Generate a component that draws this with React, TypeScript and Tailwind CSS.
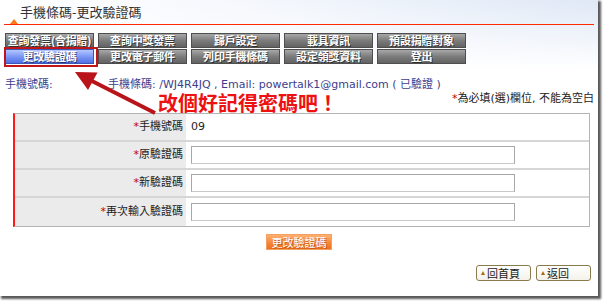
import React from "react";

const TOP_ROW = ["查詢發票(含捐贈)", "查詢中獎發票", "歸戶設定", "載具資訊", "預設捐贈對象"];
const BOTTOM_ROW = ["更改驗證碼", "更改電子郵件", "列印手機條碼", "設定領獎資料", "登出"];

const FIELDS = [
  { label: "手機號碼", value: "09" },
  { label: "原驗證碼" },
  { label: "新驗證碼" },
  { label: "再次輸入驗證碼" },
];

function MenuButton({ text, active }: { text: string; active?: boolean }) {
  return (
    <div
      className={`h-[15px] flex items-center justify-center text-[11px] leading-none font-bold text-white border tracking-[-0.2px] [text-shadow:1px_1px_0_rgba(0,0,0,0.55)] ${
        active
          ? "bg-gradient-to-b from-[#b4c6ff] via-[#7d98f4] to-[#4f70e4] border-[#3c57b8]"
          : "bg-gradient-to-b from-[#a8a8a8] via-[#7c7c7c] to-[#626262] border-[#4e4e4e]"
      }`}
    >
      {text}
    </div>
  );
}

export default function App() {
  return (
    <div className="w-[604px] h-[302px] bg-white relative overflow-hidden font-['DejaVu_Sans','Noto_Sans_CJK_TC',sans-serif]">
      <div className="w-[598px] h-[296px] bg-white relative shadow-[2px_2px_2px_1px_rgba(0,0,0,0.65)]">
        {/* Header + menu */}
        <div className="bg-gradient-to-r from-white via-[#f2f6fc] to-[#dfe8f6]">
          <div className="bg-gradient-to-b from-transparent to-white pb-[6px]">
            <div className="relative h-[25px] mx-[4px] border-b border-[#ff2a00]">
              <div className="pl-[16px] pt-[3px] text-[13px] leading-[18px] text-[#333] font-['Noto_Sans_CJK_TC',sans-serif]">
                手機條碼-更改驗證碼
              </div>
              <div className="absolute left-[6px] bottom-0 w-0 h-0 border-l-[4px] border-r-[4px] border-b-[5px] border-l-transparent border-r-transparent border-b-[#ff7a1a]" />
            </div>
            <div className="mt-[8px] pl-[5px] grid grid-cols-[repeat(5,89px)] gap-x-[4px] gap-y-[1px] font-['Noto_Sans_CJK_TC',sans-serif]">
              {TOP_ROW.map((t) => (
                <MenuButton key={t} text={t} />
              ))}
              {BOTTOM_ROW.map((t, i) => (
                <MenuButton key={t} text={t} active={i === 0} />
              ))}
            </div>
          </div>
        </div>

        {/* Info line */}
        <div className="mt-[8px] pl-[5px] flex text-[11px] leading-[14px] text-[#3d3d8c]">
          <span className="w-[103px]">手機號碼:</span>
          <span>手機條碼: /WJ4R4JQ , Email: powertalk1@gmail.com ( 已驗證 )</span>
        </div>
        <div className="pr-[4px] text-right text-[11px] leading-[14px] text-[#222]">
          <span className="text-[#c00000]">*</span>為必填(選)欄位, 不能為空白
        </div>

        {/* Form table */}
        <div className="mt-[7px] ml-[13px] w-[577px] border border-[#b4b4b4] border-l-2 border-l-[#ff1a1a]">
          {FIELDS.map((f, i) => (
            <div
              key={f.label}
              className={`flex h-[28px] ${i < FIELDS.length - 1 ? "border-b-2 border-[#d6d6d6]" : ""}`}
            >
              <div className="w-[171px] bg-[#ebebeb] flex items-center justify-end pr-[3px] text-[11px] text-[#222]">
                <span className="text-[#c00000]">*</span>
                {f.label}
              </div>
              <div className="flex-1 flex items-center pl-[5px] text-[11px] text-[#222]">
                {f.value ? (
                  <span>{f.value}</span>
                ) : (
                  <div className="w-[324px] h-[18px] border border-[#a8a8a8] border-b-[#c8c8c8] bg-white" />
                )}
              </div>
            </div>
          ))}
        </div>

        {/* Submit */}
        <div className="mt-[7px] flex justify-center">
          <div className="w-[66px] h-[16px] flex items-center justify-center bg-gradient-to-b from-[#ffb070] via-[#f88a3c] to-[#ee6f1c] border border-[#f3a060] text-white text-[11px] font-['Noto_Sans_CJK_TC',sans-serif] [text-shadow:1px_1px_0_rgba(150,60,0,0.5)]">
            更改驗證碼
          </div>
        </div>

        {/* Bottom nav */}
        <div className="mt-[15px] pr-[7px] flex justify-end gap-[5px]">
          {["回首頁", "返回"].map((t) => (
            <div
              key={t}
              className="w-[55px] h-[16px] rounded-[3px] border border-[#8a7b4c] bg-gradient-to-b from-white to-[#f4f2ea] flex items-center pl-[4px] gap-[2px] text-[11px] text-[#222] font-['Noto_Sans_CJK_TC',sans-serif]"
            >
              <span className="w-0 h-0 border-l-[2px] border-r-[2px] border-b-[4px] border-l-transparent border-r-transparent border-b-[#b06a10]" />
              {t}
            </div>
          ))}
        </div>

        {/* Annotation: red box, arrow, caption */}
        <div className="absolute left-[4px] top-[47px] w-[94px] h-[20px] border-2 border-[#c0161a]" />
        <svg className="absolute left-0 top-0" width="598" height="296" viewBox="0 0 598 296">
          <line x1="155" y1="113" x2="90" y2="80" stroke="#b8141a" strokeWidth="4" />
          <polygon points="75,72 97.5,72.5 88,90" fill="#b8141a" />
        </svg>
        <div className="absolute left-[158px] top-[93px] text-[20px] leading-[20px] font-bold text-[#ee1111] font-['Noto_Sans_CJK_TC',sans-serif]">
          改個好記得密碼吧！
        </div>
      </div>
    </div>
  );
}
